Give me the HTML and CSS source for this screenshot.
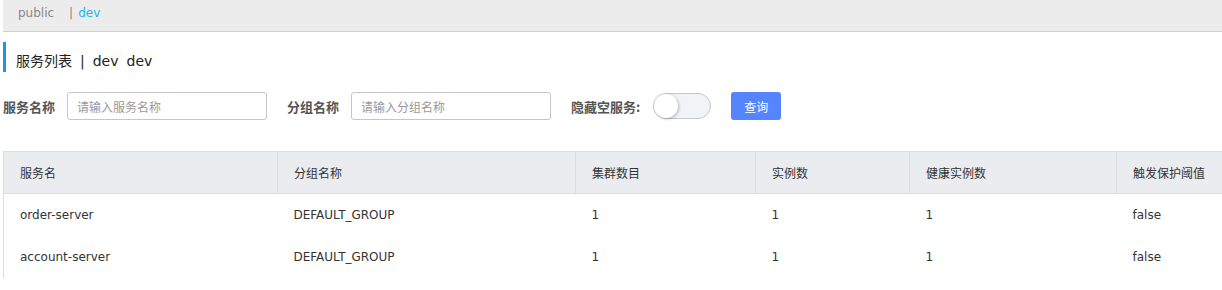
FILE: index.html
```html
<!DOCTYPE html>
<html lang="zh">
<head>
<meta charset="utf-8">
<title>服务列表</title>
<link rel="stylesheet" href="styles.css">
</head>
<body>
<div class="page">
  <div class="ns-bar">
    <span class="ns">public</span>
    <span class="sep">|</span>
    <span class="ns active">dev</span>
  </div>
  <div class="title"><span>服务列表</span><span class="pipe">|</span><span>dev</span><span class="ns2">dev</span></div>
  <div class="filters">
    <div class="field">
      <label class="lbl">服务名称</label>
      <input class="inp" type="text" placeholder="请输入服务名称">
    </div>
    <div class="field">
      <label class="lbl">分组名称</label>
      <input class="inp" type="text" placeholder="请输入分组名称">
    </div>
    <div class="field">
      <label class="lbl">隐藏空服务:</label>
      <span class="switch"><span class="knob"></span></span>
    </div>
    <button class="btn" type="button">查询</button>
  </div>
  <table class="tbl">
    <colgroup>
      <col style="width:274px"><col style="width:298px"><col style="width:180px"><col style="width:154px"><col style="width:207px"><col>
    </colgroup>
    <thead>
      <tr><th>服务名</th><th>分组名称</th><th>集群数目</th><th>实例数</th><th>健康实例数</th><th>触发保护阈值</th></tr>
    </thead>
    <tbody>
      <tr><td>order-server</td><td>DEFAULT_GROUP</td><td>1</td><td>1</td><td>1</td><td>false</td></tr>
      <tr><td>account-server</td><td>DEFAULT_GROUP</td><td>1</td><td>1</td><td>1</td><td>false</td></tr>
    </tbody>
  </table>
</div>
</body>
</html>
```
FILE: styles.css
```css
* { box-sizing: border-box; }
html, body { margin: 0; padding: 0; background: #fff; overflow: hidden; }
body {
  font-family: "DejaVu Sans", "Noto Sans CJK SC", sans-serif;
  font-size: 12px;
  color: #333;
}
.page { padding-left: 3px; width: 1222px; }
.ns-bar {
  height: 32px;
  background: #ececec;
  border-bottom: 1px solid #d0d0d0;
  padding: 3px 0 0 15px;
  line-height: 20px;
  display: flex;
  align-items: flex-start;
}
.ns { color: #888; }
.sep { color: #888; margin-left: 15px; margin-right: 5px; }
.ns.active { color: #22b7e0; }
.title {
  margin-top: 10px;
  height: 30px;
  border-left: 3px solid #1a9cd3;
  padding: 8px 0 0 10px;
  line-height: 22px;
  font-size: 14px;
  color: #222;
  display: flex;
}
.title .pipe { margin: 0 8px; }
.title .ns2 { margin-left: 8px; }
.filters {
  margin-top: 20px;
  display: flex;
  align-items: center;
  gap: 20px;
  height: 28px;
}
.field { display: flex; align-items: center; gap: 12px; }
.field.sw { gap: 13px; }
.lbl {
  font-family: "Noto Sans CJK SC", sans-serif;
  font-weight: bold;
  font-size: 13px;
  color: #555;
}
.inp {
  width: 200px;
  height: 28px;
  border: 1px solid #c4c6cf;
  border-radius: 3px;
  padding: 0 9px;
  font-family: "Noto Sans CJK SC", sans-serif;
  font-size: 12px;
  color: #333;
  outline: none;
}
.inp::placeholder { color: #999; }
.switch {
  width: 58px;
  height: 26px;
  margin-left: 1px;
  border: 1px solid #c4c6cf;
  border-radius: 13px;
  background: #f2f3f7;
  display: flex;
  align-items: center;
}
.knob {
  width: 24px;
  height: 24px;
  border-radius: 50%;
  background: #fff;
  box-shadow: 1px 1px 3px rgba(0,0,0,0.25);
}
.btn {
  width: 50px;
  height: 28px;
  border: none;
  border-radius: 3px;
  background: #5584ff;
  color: #fff;
  font-family: "Noto Sans CJK SC", sans-serif;
  font-size: 12px;
  padding: 0;
}
.tbl {
  margin-top: 31px;
  width: 1219px;
  border-collapse: collapse;
  table-layout: fixed;
  border-left: 1px solid #dcdee3;
}
.tbl th {
  background: #ebecf0;
  height: 42px;
  border-top: 1px solid #dcdee3;
  border-bottom: 1px solid #dcdee3;
  border-right: 1px solid #dcdee3;
  text-align: left;
  font-weight: normal;
  padding: 0 16px;
  color: #333;
}
.tbl th:last-child { border-right: none; }
.tbl td {
  height: 42px;
  padding: 0 16px;
  color: #333;
  white-space: nowrap;
}
```
